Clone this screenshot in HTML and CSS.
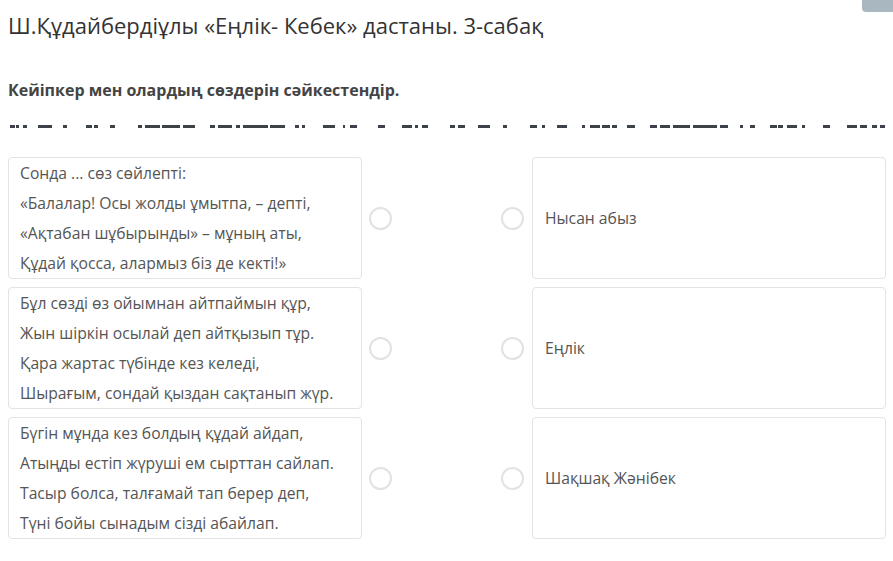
FILE: index.html
```html
<!DOCTYPE html>
<html lang="kk">
<head>
<meta charset="utf-8">
<title>Еңлік- Кебек</title>
<link rel="stylesheet" href="styles.css">
</head>
<body>
<div class="tab"></div>
<h1 class="title">Ш.Құдайбердіұлы «Еңлік- Кебек» дастаны. 3-сабақ</h1>
<p class="question">Кейіпкер мен олардың сөздерін сәйкестендір.</p>
<svg class="clipped" width="877" height="4" viewBox="0 0 877 4">
  <g fill="#3d4248">
    <rect x="2" y="0" width="5" height="3"/><rect x="8" y="0" width="3" height="3"/>
    <rect x="15" y="0" width="4" height="3"/><rect x="30" y="0" width="14" height="3"/>
    <rect x="55" y="0" width="4" height="3"/><rect x="78" y="0" width="6" height="3"/>
    <rect x="86" y="0" width="4" height="3"/><rect x="102" y="0" width="5" height="3"/>
    <rect x="130" y="0" width="4" height="3"/><rect x="137" y="0" width="15" height="3"/>
    <rect x="154" y="0" width="18" height="3"/><rect x="175" y="0" width="12" height="3"/>
    <rect x="202" y="0" width="5" height="3"/><rect x="210" y="0" width="14" height="3"/>
    <rect x="228" y="0" width="4" height="3"/><rect x="235" y="0" width="25" height="3"/>
    <rect x="262" y="0" width="15" height="3"/><rect x="287" y="0" width="4" height="3"/>
    <rect x="294" y="0" width="3" height="3"/><rect x="315" y="0" width="12" height="3"/>
    <rect x="335" y="0" width="2" height="3"/><rect x="342" y="0" width="7" height="3"/>
    <rect x="370" y="0" width="7" height="3"/><rect x="394" y="0" width="10" height="3"/>
    <rect x="407" y="0" width="3" height="3"/><rect x="414" y="0" width="6" height="3"/>
    <rect x="442" y="0" width="5" height="3"/><rect x="450" y="0" width="7" height="3"/>
    <rect x="470" y="0" width="12" height="3"/><rect x="495" y="0" width="4" height="3"/>
    <rect x="522" y="0" width="7" height="3"/><rect x="534" y="0" width="3" height="3"/>
    <rect x="549" y="0" width="10" height="3"/><rect x="574" y="0" width="3" height="3"/>
    <rect x="582" y="0" width="10" height="3"/><rect x="594" y="0" width="8" height="3"/>
    <rect x="604" y="0" width="5" height="3"/><rect x="619" y="0" width="8" height="3"/>
    <rect x="642" y="0" width="7" height="3"/><rect x="652" y="0" width="10" height="3"/>
    <rect x="665" y="0" width="17" height="3"/><rect x="685" y="0" width="24" height="3"/>
    <rect x="712" y="0" width="8" height="3"/><rect x="732" y="0" width="3" height="3"/>
    <rect x="742" y="0" width="5" height="3"/><rect x="762" y="0" width="7" height="3"/>
    <rect x="770" y="0" width="5" height="3"/><rect x="779" y="0" width="10" height="3"/>
    <rect x="794" y="0" width="3" height="3"/><rect x="815" y="0" width="7" height="3"/>
    <rect x="839" y="0" width="10" height="3"/><rect x="852" y="0" width="7" height="3"/>
    <rect x="864" y="0" width="5" height="3"/><rect x="872" y="0" width="5" height="3"/>
  </g>
</svg>

<div class="match">
  <div class="row">
    <div class="card stanza">
      <p>Сонда ... сөз сөйлепті:</p>
      <p>«Балалар! Осы жолды ұмытпа, – депті,</p>
      <p>«Ақтабан шұбырынды» – мұның аты,</p>
      <p>Құдай қосса, алармыз біз де кекті!»</p>
    </div>
    <div class="links"><span class="radio"></span><span class="radio"></span></div>
    <div class="card answer">Нысан абыз</div>
  </div>
  <div class="row">
    <div class="card stanza">
      <p>Бұл сөзді өз ойымнан айтпаймын құр,</p>
      <p>Жын шіркін осылай деп айтқызып тұр.</p>
      <p>Қара жартас түбінде кез келеді,</p>
      <p>Шырағым, сондай қыздан сақтанып жүр.</p>
    </div>
    <div class="links"><span class="radio"></span><span class="radio"></span></div>
    <div class="card answer">Еңлік</div>
  </div>
  <div class="row">
    <div class="card stanza">
      <p>Бүгін мұнда кез болдың құдай айдап,</p>
      <p>Атыңды естіп жүруші ем сырттан сайлап.</p>
      <p>Тасыр болса, талғамай тап берер деп,</p>
      <p>Түні бойы сынадым сізді абайлап.</p>
    </div>
    <div class="links"><span class="radio"></span><span class="radio"></span></div>
    <div class="card answer">Шақшақ Жәнібек</div>
  </div>
</div>
</body>
</html>
```
FILE: styles.css
```css
* { box-sizing: border-box; }
html, body { background: #fff; }
body {
  margin: 0;
  padding: 0 7px 0 8px;
  font-family: "Open Sans", "Noto Sans", sans-serif;
  color: #555;
  position: relative;
}
.tab {
  position: absolute;
  top: 0;
  right: 0;
  width: 31px;
  height: 12px;
  background: #a9b8c0;
  border-bottom-left-radius: 4px;
}
.title {
  margin: 0;
  padding-top: 10px;
  font-size: 22px;
  font-weight: 400;
  line-height: 30px;
  color: #333;
}
.question {
  margin: 0;
  padding-top: 39px;
  font-size: 16px;
  font-weight: 700;
  line-height: 22px;
  color: #444;
}
.clipped {
  display: block;
  margin-top: 24px;
}
.match {
  display: flex;
  flex-direction: column;
  gap: 8px;
  margin-top: 28px;
}
.row {
  display: grid;
  grid-template-columns: 354px 1fr 354px;
}
.card {
  border: 1px solid #e3e3e3;
  border-radius: 4px;
  background: #fff;
  font-size: 15.7px;
  color: #555;
}
.stanza {
  padding: 0 11px;
}
.stanza p {
  margin: 0;
  line-height: 30px;
  white-space: nowrap;
}
.answer {
  display: flex;
  align-items: center;
  padding: 0 12px;
  min-height: 122px;
}
.links {
  display: flex;
  justify-content: space-between;
  align-items: center;
  padding: 0 8px 0 7px;
}
.radio {
  width: 23px;
  height: 23px;
  border: 2px solid #e2e2e2;
  border-radius: 50%;
  background: #fff;
}
```
